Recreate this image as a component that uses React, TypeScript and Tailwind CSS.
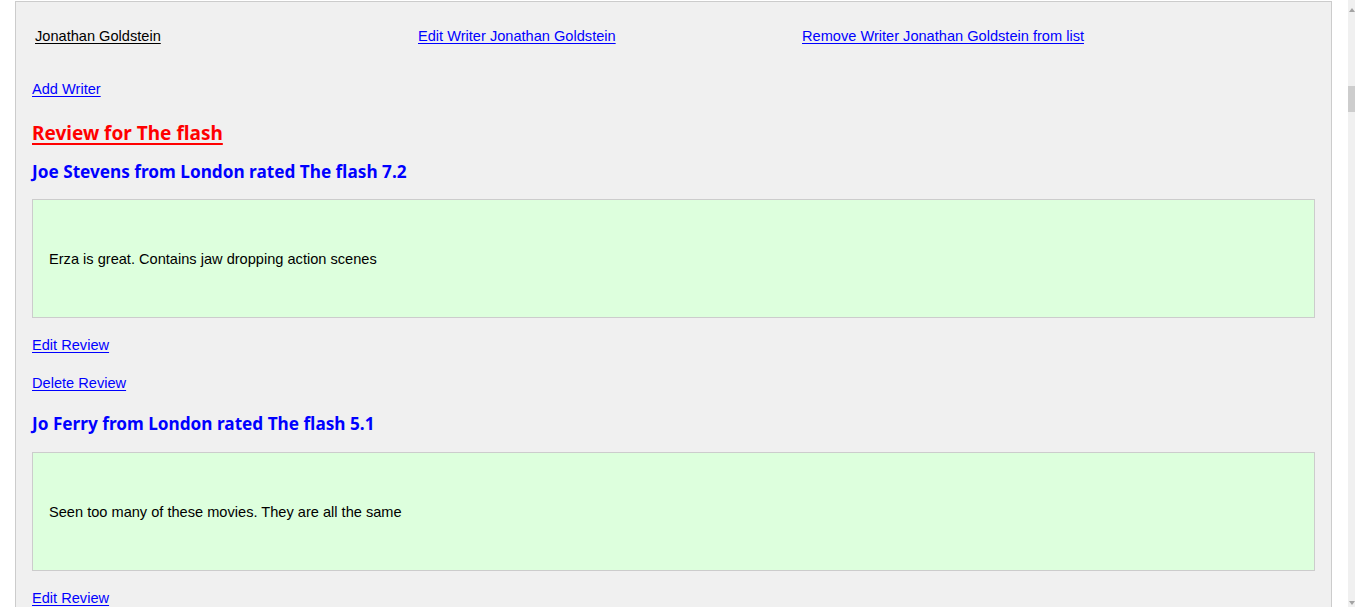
import React from "react";

type reviewProps = {
  id: string;
  name: string;
  city: string;
  rating: string;
  text: string;
};

const reviews: reviewProps[] = [
  { id: "1", name: "Joe Stevens", city: "London", rating: "7.2", text: "Erza is great. Contains jaw dropping action scenes" },
  { id: "2", name: "Jo Ferry", city: "London", rating: "5.1", text: "Seen too many of these movies. They are all the same" },
];

const link = "text-[#0000ff] underline underline-offset-[2px] decoration-1";

export default function App() {
  return (
    <div className="w-[1355px] h-[607px] overflow-hidden bg-white flex font-['Liberation_Sans',Arial,sans-serif] text-[14.6px] text-black">
      <div className="w-[15px] shrink-0" />
      <main className="w-[1317px] shrink-0 mt-px border-t border-x border-[#cccccc] bg-[#f0f0f0] pl-4 pr-4 flex flex-col">
        <div className="grid grid-cols-[383px_384px_auto] pt-[26px] h-[62px]">
          <span className="pl-[3px] leading-[17px]">
            <span className="underline underline-offset-[2px] decoration-1">Jonathan Goldstein</span>
          </span>
          <a className={`pl-[3px] leading-[17px] ${link}`}>
            Edit Writer Jonathan Goldstein
          </a>
          <a className={`pl-[3px] leading-[17px] ${link}`}>
            Remove Writer Jonathan Goldstein from list
          </a>
        </div>
        <a className={`mt-[18px] leading-[17px] self-start ${link}`}>Add Writer</a>
        <h1 className="mt-[22px] self-start font-['Noto_Sans',sans-serif] font-bold text-[19px] leading-[26px] text-[#ff0000] underline underline-offset-[3px] decoration-[1.5px]">
          Review for The flash
        </h1>
        {reviews.map((r, i) => (
          <section key={r.id} className="flex flex-col">
            <h2 className={`${i === 0 ? "mt-[14px]" : "mt-[20px]"} font-['Noto_Sans',sans-serif] font-bold text-[17.2px] leading-[24px] text-[#0000ff]`}>
              {r.name} from {r.city} rated The flash {r.rating}
            </h2>
            <div className={`${i === 0 ? "mt-[15px]" : "mt-[16px]"} w-[1283px] h-[119px] border border-[#cccccc] bg-[#ddffdd] flex items-center px-4`}>
              <p className="leading-[17px] pt-px">{r.text}</p>
            </div>
            <a className={`mt-[19px] self-start leading-[17px] ${link}`}>Edit Review</a>
            {i === 0 && (
              <a className={`mt-[21px] self-start leading-[17px] ${link}`}>Delete Review</a>
            )}
          </section>
        ))}
      </main>
      <div className="w-[16px] shrink-0" />
      <div className="w-[7px] shrink-0 bg-[#f0f0f0] relative">
        <div className="absolute left-[1px] top-[8px] w-0 h-0 border-x-[3px] border-x-transparent border-b-[4px] border-b-[#a3a3a3]" />
        <div className="absolute left-0 top-[86px] w-[7px] h-[26px] bg-[#cdcdcd]" />
        <div className="absolute left-[1px] bottom-[2px] w-0 h-0 border-x-[3px] border-x-transparent border-t-[4px] border-t-[#a3a3a3]" />
      </div>
    </div>
  );
}
